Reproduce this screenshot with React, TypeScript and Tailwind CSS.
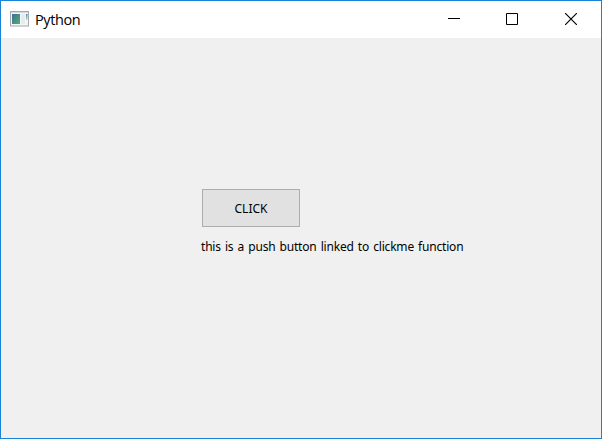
export default function App() {
  return (
    <main className="flex h-[439px] w-[602px] flex-col overflow-hidden border border-[#1883d7] bg-[#f0f0f0] font-['Noto_Sans','Open_Sans',sans-serif] text-black">
      <header className="flex h-[37px] shrink-0 items-center bg-white pl-[9px]">
        <svg className="mb-px h-[16px] w-[19px]" viewBox="0 0 19 16">
          <defs>
            <linearGradient id="pane" x1="0" y1="0" x2="1" y2="1">
              <stop stopColor="#3d6c9c" />
              <stop offset="1" stopColor="#55ad72" />
            </linearGradient>
            <linearGradient id="strip" x1="0" y1="0" x2="0" y2="1">
              <stop stopColor="#527fae" />
              <stop offset="1" stopColor="#b9e2c7" />
            </linearGradient>
          </defs>
          <rect width="19" height="15.5" fill="#a4a9ad" />
          <rect x="1" y="1" width="17" height="13.5" fill="#f3f5f6" />
          <rect x="1" y="1" width="17" height="1" fill="#d5d9dd" />
          <rect x="2" y="3" width="8" height="10" fill="url(#pane)" />
          <rect x="11" y="3" width="4" height="10" fill="#e7ebec" />
          <rect x="16" y="3" width="1.5" height="6" fill="url(#strip)" />
        </svg>
        <h1 className="ml-[6px] font-['Open_Sans',sans-serif] text-[14.5px] leading-[20px] tracking-[-0.4px]">Python</h1>
        <div className="ml-auto flex h-full pr-px pb-[2px]">
          <button aria-label="Minimize" className="flex h-full w-[58px] items-center justify-center">
            <svg width="12" height="12" viewBox="0 0 12 12" stroke="#000"><path d="M0 5.5H12" /></svg>
          </button>
          <button aria-label="Maximize" className="flex h-full w-[58px] items-center justify-center">
            <svg width="12" height="12" viewBox="0 0 12 12" fill="none" stroke="#000"><path d="M.5.5H11.5V11.5H.5Z" /></svg>
          </button>
          <button aria-label="Close" className="flex h-full w-[59px] items-center justify-center">
            <svg width="12" height="12" viewBox="0 0 12 12" fill="none" stroke="#000" strokeWidth="1.15"><path d="M0 0L12 12M12 0L0 12" /></svg>
          </button>
        </div>
      </header>
      <section className="flex flex-col items-start pt-[151px] pl-[200px]">
        <button className="ml-px flex h-[38px] w-[98px] items-center justify-center border border-[#adadad] bg-[#e1e1e1] pt-[2px] text-[12px]">CLICK</button>
        <p className="mt-[11px] text-[12px] leading-[18px] tracking-[-0.19px] whitespace-nowrap [word-spacing:1.2px]">this is a push button linked to clickme function</p>
      </section>
    </main>
  );
}
